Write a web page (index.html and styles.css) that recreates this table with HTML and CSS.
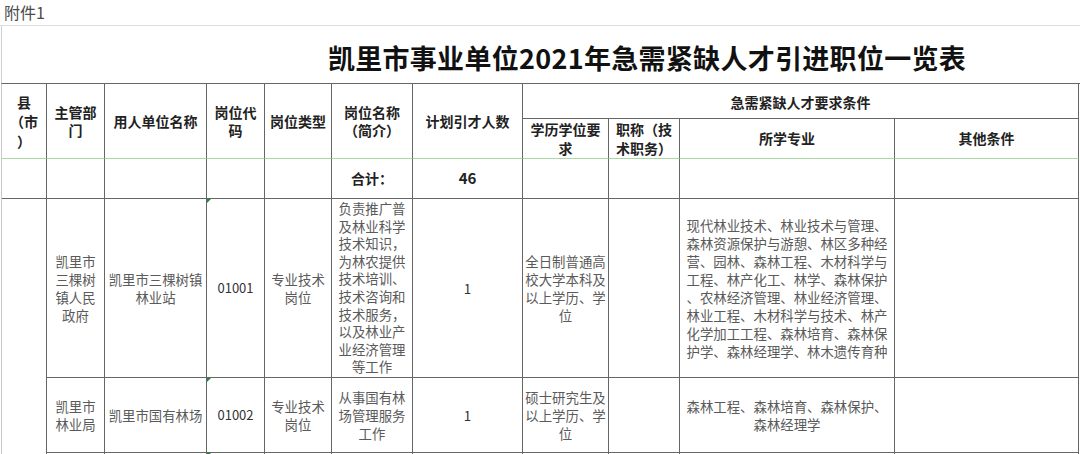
FILE: index.html
```html
<!DOCTYPE html>
<html lang="zh-CN">
<head>
<meta charset="utf-8">
<title>凯里市事业单位2021年急需紧缺人才引进职位一览表</title>
<link rel="stylesheet" href="styles.css">
</head>
<body>
<div class="page">
  <div class="attach">附件1</div>
  <div class="title-row"><h1 class="title">凯里市事业单位2021年急需紧缺人才引进职位一览表</h1></div>
  <div class="sheet">
    <div class="c h hs county-h">县<br>（市<br>）</div>
    <div class="c h hs">主管部<br>门</div>
    <div class="c h hs">用人单位名称</div>
    <div class="c h hs">岗位代<br>码</div>
    <div class="c h hs">岗位类型</div>
    <div class="c h hs">岗位名称<br>（简介）</div>
    <div class="c h hs">计划引才人数</div>
    <div class="c h group">急需紧缺人才要求条件</div>
    <div class="c h hb">学历学位要<br>求</div>
    <div class="c h hb">职称（技<br>术职务）</div>
    <div class="c h hb">所学专业</div>
    <div class="c h hb">其他条件</div>

    <div class="c"></div>
    <div class="c"></div>
    <div class="c"></div>
    <div class="c"></div>
    <div class="c"></div>
    <div class="c h">合计：</div>
    <div class="c h num">46</div>
    <div class="c"></div>
    <div class="c"></div>
    <div class="c"></div>
    <div class="c"></div>

    <div class="c county"></div>
    <div class="c">凯里市<br>三棵树<br>镇人民<br>政府</div>
    <div class="c">凯里市三棵树镇<br>林业站</div>
    <div class="c code">01001</div>
    <div class="c">专业技术<br>岗位</div>
    <div class="c tight">负责推广普<br>及林业科学<br>技术知识，<br>为林农提供<br>技术培训、<br>技术咨询和<br>技术服务，<br>以及林业产<br>业经济管理<br>等工作</div>
    <div class="c dark">1</div>
    <div class="c">全日制普通高<br>校大学本科及<br>以上学历、学<br>位</div>
    <div class="c"></div>
    <div class="c">现代林业技术、林业技术与管理、<br>森林资源保护与游憩、林区多种经<br>营、园林、森林工程、木材科学与<br>工程、林产化工、林学、森林保护<br>、农林经济管理、林业经济管理、<br>林业工程、木材科学与技术、林产<br>化学加工工程、森林培育、森林保<br>护学、森林经理学、林木遗传育种</div>
    <div class="c"></div>

    <div class="c">凯里市<br>林业局</div>
    <div class="c">凯里市国有林场</div>
    <div class="c code">01002</div>
    <div class="c">专业技术<br>岗位</div>
    <div class="c">从事国有林<br>场管理服务<br>工作</div>
    <div class="c dark">1</div>
    <div class="c">硕士研究生及<br>以上学历、学<br>位</div>
    <div class="c"></div>
    <div class="c">森林工程、森林培育、森林保护、<br>森林经理学</div>
    <div class="c"></div>

    <div class="c"></div>
    <div class="c"></div>
    <div class="c code"></div>
    <div class="c"></div>
    <div class="c"></div>
    <div class="c"></div>
    <div class="c"></div>
    <div class="c"></div>
    <div class="c"></div>
    <div class="c"></div>
  </div>
</div>
</body>
</html>
```

FILE: styles.css
```css
html, body {
  margin: 0;
  padding: 0;
  background: #fff;
  overflow: hidden;
}

.page {
  width: 1080px;
  font-family: "Noto Sans CJK SC", "Noto Sans", sans-serif;
}

.attach {
  height: 25px;
  line-height: 25px;
  padding-left: 4px;
  font-size: 16px;
  color: #4a4a4a;
  border-bottom: 1px solid #dcdcdc;
}

.title-row {
  height: 57px;
  margin-left: 1px;
  border-left: 1px solid #cfcfcf;
  display: flex;
  align-items: center;
  justify-content: center;
  padding-left: 212px;
  padding-top: 5px;
  box-sizing: border-box;
}

.title {
  margin: 0;
  font-size: 27px;
  font-weight: 700;
  color: #111;
  letter-spacing: 0.3px;
}

.sheet {
  margin-left: 1px;
  width: 1078px;
  border-left: 1px solid #c8c8c8;
  border-top: 1px solid #666;
  display: grid;
  grid-template-columns: 45px 58px 102px 58px 67px 81px 110px 86px 71px 215px 184px;
  grid-template-rows: 35px 40px 40px 179px 75px 40px;
}

.c {
  box-sizing: border-box;
  border-right: 1px solid #666;
  border-bottom: 1px solid #666;
  display: flex;
  align-items: center;
  justify-content: center;
  text-align: center;
  overflow: hidden;
  font-size: 13.4px;
  line-height: 18px;
  color: #5a5a5a;
  position: relative;
}

.tight {
  line-height: 17.6px;
}

.h {
  font-size: 14px;
  font-weight: 700;
  color: #222;
  line-height: 18.5px;
}

.county-h {
  line-height: 19.5px;
  padding-top: 2px;
}

.hs {
  grid-row: span 2;
  border-bottom-color: #a9d9a3;
}

.hb {
  border-bottom-color: #a9d9a3;
}

.group {
  grid-column: span 4;
  padding-top: 3px;
}

.num {
  font-size: 15px;
}

.county {
  grid-row: span 3;
}

.code {
  color: #333;
  font-size: 13px;
}

.code::before {
  content: "";
  position: absolute;
  left: 0;
  top: 0;
  border-top: 4px solid #1f8a3a;
  border-right: 4px solid transparent;
}

.dark {
  color: #333;
}
```
